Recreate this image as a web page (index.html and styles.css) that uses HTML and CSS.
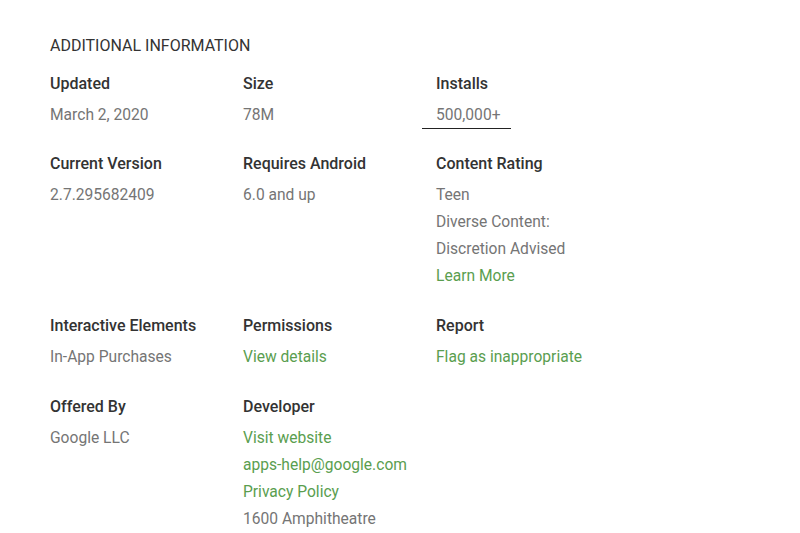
FILE: index.html
```html
<!DOCTYPE html>
<html lang="en">
<head>
    <meta charset="UTF-8">
    <meta name="viewport" content="width=device-width, initial-scale=1.0">
    <title>Additional Information</title>
    <link rel="stylesheet" href="styles.css">
</head>
<body>
    <div class="container">
        <h2>Additional Information</h2>
        <div class="info-grid">
            <div class="info-item">
                <div class="info-label">Updated</div>
                <div class="info-value">March 2, 2020</div>
            </div>
            <div class="info-item">
                <div class="info-label">Size</div>
                <div class="info-value">78M</div>
            </div>
            <div class="info-item">
                <div class="info-label">Installs</div>
                <div class="info-value installs">500,000+</div>
            </div>

            <div class="info-item">
                <div class="info-label">Current Version</div>
                <div class="info-value">2.7.295682409</div>
            </div>
            <div class="info-item">
                <div class="info-label">Requires Android</div>
                <div class="info-value">6.0 and up</div>
            </div>
            <div class="info-item">
                <div class="info-label">Content Rating</div>
                <div class="info-value">Teen</div>
                <div class="info-value">Diverse Content:</div>
                <div class="info-value">Discretion Advised</div>
                <a href="#" class="info-link">Learn More</a>
            </div>

            <div class="info-item">
                <div class="info-label">Interactive Elements</div>
                <div class="info-value">In-App Purchases</div>
            </div>
            <div class="info-item">
                <div class="info-label">Permissions</div>
                <a href="#" class="info-link">View details</a>
            </div>
            <div class="info-item">
                <div class="info-label">Report</div>
                <a href="#" class="info-link">Flag as inappropriate</a>
            </div>

            <div class="info-item">
                <div class="info-label">Offered By</div>
                <div class="info-value">Google LLC</div>
            </div>
            <div class="info-item">
                <div class="info-label">Developer</div>
                <a href="#" class="info-link">Visit website</a>
                <a href="#" class="info-link">apps-help@google.com</a>
                <a href="#" class="info-link">Privacy Policy</a>
                <div class="info-value">1600 Amphitheatre</div>
            </div>
        </div>
    </div>
</body>
</html>
```

FILE: styles.css
```css
body {
    font-family: Roboto, "Liberation Sans", Arial, sans-serif;
    margin: 0;
    padding: 0;
    background-color: #fff;
    color: #333;
}

.container {
    padding: 36px 50px 0;
}

h2 {
    margin: 0 0 18px;
    font-size: 16px;
    font-weight: 400;
    line-height: 20px;
    text-transform: uppercase;
    color: #333;
}

.info-grid {
    display: grid;
    grid-template-columns: 193px 193px 193px;
    row-gap: 25px;
}

.info-item:nth-child(n+7) {
    margin-top: 1px;
}

.info-label {
    font-size: 16px;
    font-weight: 500;
    line-height: 20px;
    margin-bottom: 8px;
    color: #333;
}

.info-value,
.info-link {
    display: block;
    font-size: 15.6px;
    line-height: 27px;
    color: #757575;
    text-decoration: none;
}

.info-link {
    color: #5a9e4f;
}

.installs {
    position: relative;
}

.installs::after {
    content: "";
    position: absolute;
    left: -14px;
    bottom: 0;
    width: 89px;
    height: 1px;
    background-color: #222;
}
```
